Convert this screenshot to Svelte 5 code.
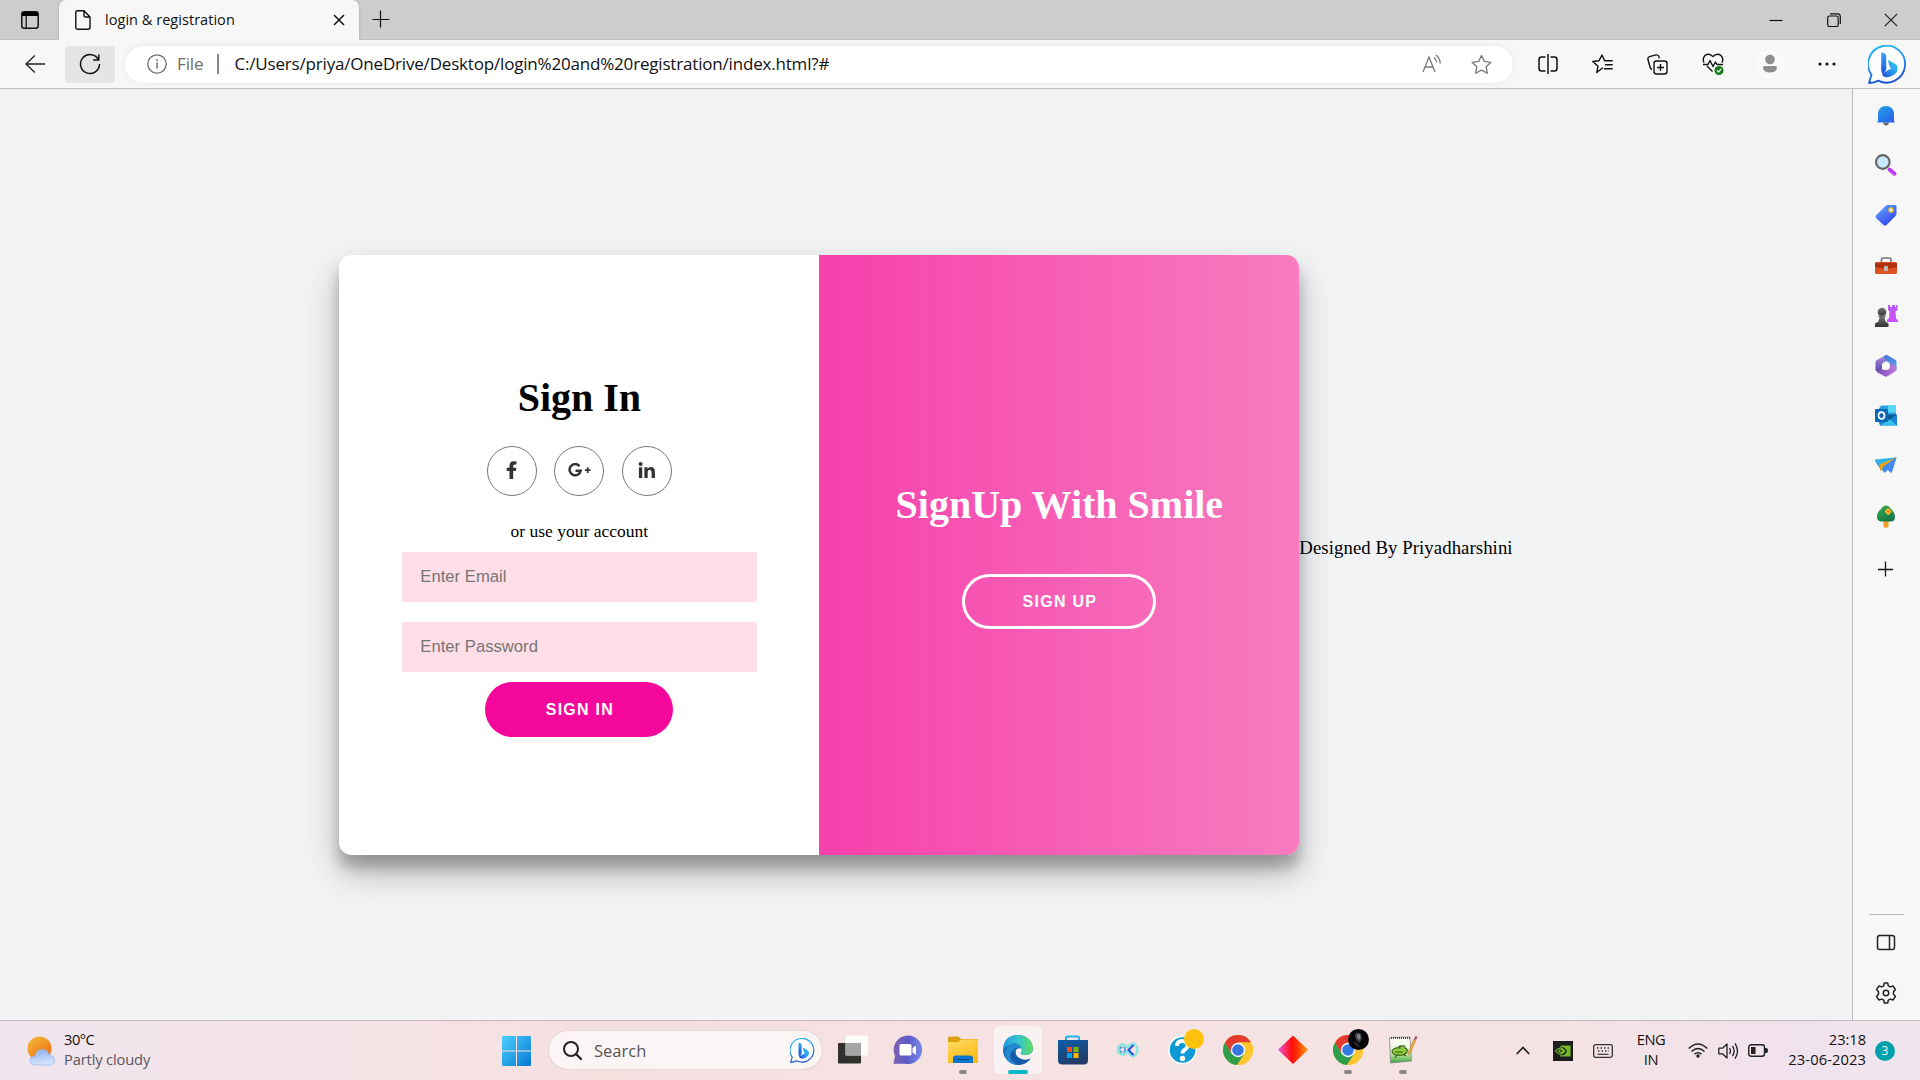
<script>
  const socials = ['facebook', 'google', 'linkedin'];
  const side = ['bell', 'lens', 'tag', 'toolbox', 'games', 'm365', 'outlook', 'drop', 'tree', 'plus'];
  const apps = ['task', 'chat', 'folder', 'edge', 'store', 'vs', 'help', 'chrome', 'diamond', 'chromeUser', 'notepad'];
  const running = ['folder', 'chromeUser', 'notepad'];
</script>

{#snippet bing()}
  <svg viewBox="0 0 38 38" class="fill">
    <path d="M1 37 3.400 29A18 18 0 1 1 10 34.700Q6 37 1 37Z" fill="#fff" stroke="url(#bingRing)" stroke-width="1.800" stroke-linejoin="round" />
    <path d="M13 7q4 .5 4.800 3.500V24l-3.200 4.500Q12.800 27 12.800 24Z" fill="url(#bingStem)" />
    <path d="M19.500 14.500 27.500 19q2.500 3 .5 7.500-3.500 4.500-10 5-3.500-.5-4.500-3.500l9-5-2-3.500Z" fill="url(#bingBowl)" />
  </svg>
{/snippet}

{#snippet chrome()}
  <circle cx="15" cy="15" r="15" fill="#fbc02d" />
  <path d="M2 7.500A15 15 0 0 1 28 7.500H15L8.500 18.800Z" fill="#e33b2e" />
  <path d="M2 7.500A15 15 0 0 0 14 30l7.500-11.200H8.500Z" fill="#2f9e4b" />
  <path d="M28 7.500H15v5l6.500 6.300L14 30A15 15 0 0 0 28 7.500Z" fill="#fdc52e" />
  <circle cx="15" cy="15" r="7.200" fill="#fff" />
  <circle cx="15" cy="15" r="5.800" fill="#3478e5" />
{/snippet}

<svg class="defs" width="0" height="0">
  <defs>
    <linearGradient id="bingRing" x2=".3" y2="1"><stop stop-color="#25bdf4" /><stop offset=".6" stop-color="#238de9" /><stop offset="1" stop-color="#1c4ed0" /></linearGradient>
    <linearGradient id="bingStem" x2="0" y2="1"><stop stop-color="#3aa1f2" /><stop offset="1" stop-color="#1c56df" /></linearGradient>
    <linearGradient id="bingBowl" x1="1" x2="0" y2="1"><stop stop-color="#27d3ee" /><stop offset=".5" stop-color="#2d9cf0" /><stop offset="1" stop-color="#1b45d5" /></linearGradient>
    <linearGradient id="blueG" x2=".8" y2="1"><stop stop-color="#20a6e3" /><stop offset="1" stop-color="#2960ed" /></linearGradient>
    <linearGradient id="tagG" x2=".7" y2="1"><stop stop-color="#65adff" /><stop offset="1" stop-color="#3443f0" /></linearGradient>
    <linearGradient id="winG" x2="1" y2="1"><stop stop-color="#4bd0fb" /><stop offset="1" stop-color="#0878d4" /></linearGradient>
    <linearGradient id="sunG" x2=".8" y2="1"><stop stop-color="#f2bd3b" /><stop offset="1" stop-color="#ef6b12" /></linearGradient>
    <linearGradient id="cloudG" x2=".2" y2="1"><stop stop-color="#8caeed" /><stop offset="1" stop-color="#d3e4fb" /></linearGradient>
    <linearGradient id="edgeG" x2="1"><stop stop-color="#249bd9" /><stop offset=".5" stop-color="#31c3cf" /><stop offset="1" stop-color="#63dd5d" /></linearGradient>
    <linearGradient id="edgeB" x2="1" y2="1"><stop stop-color="#1a80cf" /><stop offset="1" stop-color="#104e96" /></linearGradient>
    <linearGradient id="diaG"><stop stop-color="#ef52dc" /><stop offset=".45" stop-color="#ff1010" /><stop offset=".6" stop-color="#ff2606" /><stop offset="1" stop-color="#ff9f08" /></linearGradient>
    <linearGradient id="chatG" x1="0" y1=".4" x2="1" y2=".5"><stop stop-color="#7d61ae" /><stop offset=".5" stop-color="#5c5cc9" /><stop offset="1" stop-color="#7b8be5" /></linearGradient>
    <linearGradient id="foldG" x2=".5" y2="1"><stop stop-color="#ffdb67" /><stop offset="1" stop-color="#fbbc16" /></linearGradient>
    <linearGradient id="storeG" x2=".4" y2="1"><stop stop-color="#0d5da8" /><stop offset="1" stop-color="#233c68" /></linearGradient>
    <linearGradient id="treeG" x2=".5" y2="1"><stop stop-color="#40ad50" /><stop offset="1" stop-color="#147a48" /></linearGradient>
    <linearGradient id="rookG" x2="0" y2="1"><stop stop-color="#b85cef" /><stop offset="1" stop-color="#cd4cff" /></linearGradient>
    <linearGradient id="pawnG" x2="0" y2="1"><stop stop-color="#777" /><stop offset="1" stop-color="#333" /></linearGradient>
    <linearGradient id="notesG" x2="0" y2="1"><stop stop-color="#fff" /><stop offset=".4" stop-color="#eef6de" /><stop offset=".7" stop-color="#b4dd8c" /><stop offset="1" stop-color="#32a545" /></linearGradient>
    <linearGradient id="hexL" x2="0" y2="1"><stop stop-color="#b48be6" /><stop offset="1" stop-color="#5345a8" /></linearGradient>
    <linearGradient id="hexR" x2="0" y2="1"><stop stop-color="#3f74d8" /><stop offset="1" stop-color="#6fb0ee" /></linearGradient>
    <linearGradient id="hexB"><stop stop-color="#7a4fb5" /><stop offset="1" stop-color="#c07ae0" /></linearGradient>
  </defs>
</svg>

<div class="screen">
  <header class="tabs">
    <div class="workspace">
      <svg width="18" height="18" viewBox="0 0 18 18"><rect x=".8" y=".8" width="16.400" height="16.400" rx="2.500" fill="none" stroke="#111" stroke-width="1.500" /><path d="M1 2.500Q1 1 3 1h12q2 0 2 1.500V5H1Z" fill="#000" /><path d="M5.200 5v12" stroke="#111" stroke-width="1.300" /></svg>
    </div>
    <div class="tab">
      <svg width="16" height="20" viewBox="0 0 16 20" fill="none" stroke="#111" stroke-width="1.400" stroke-linejoin="round"><path d="M2.500.8H9L15 7v10.200q0 2-2 2H2.800q-2 0-2-2V2.800q0-2 1.700-2ZM9 1v4.200Q9 7 10.800 7H15" /></svg>
      <span class="title">login &amp; registration</span>
      <svg class="x" width="12" height="12" viewBox="0 0 12 12" stroke="#111" stroke-width="1.500"><path d="m1 1 10 10M11 1 1 11" /></svg>
    </div>
    <svg class="newtab" width="18" height="18" viewBox="0 0 18 18" stroke="#111" stroke-width="1.200"><path d="M8.500 .5v17M.5 9.500h17" /></svg>
    <div class="window-controls">
      <span><svg width="14" height="14" viewBox="0 0 14 14" stroke="#111" stroke-width="1.200"><path d="M.5 7.500h13" /></svg></span>
      <span><svg width="14" height="14" viewBox="0 0 14 14" fill="none" stroke="#111" stroke-width="1.200"><rect x=".7" y="3" width="10.500" height="10.500" rx="1.800" /><path d="M3 .8h7.500q2.800 0 2.800 2.800V11" /></svg></span>
      <span><svg width="14" height="14" viewBox="0 0 14 14" stroke="#222" stroke-width="1.200"><path d="m.8.8 12.400 12.400M13.200.8.800 13.200" /></svg></span>
    </div>
  </header>

  <nav class="toolbar">
    <svg class="back" width="21" height="18" viewBox="0 0 21 18" fill="none" stroke="#222" stroke-width="1.300"><path d="M20 9H.9M9.800.5 1 9l8.800 8.500" /></svg>
    <div class="reload">
      <svg width="22" height="22" viewBox="0 0 22 22" fill="none" stroke="#111" stroke-width="1.500"><path d="M19.600 7A9.500 9.500 0 1 0 20.500 11M19.800 1.500v5.600h-5.600" /></svg>
    </div>
    <div class="omnibox">
      <svg class="info" width="20" height="20" viewBox="0 0 20 20" fill="none" stroke="#707070" stroke-width="1.300"><circle cx="10" cy="10" r="9.200" /><path d="M10 8.500v6M10 5.200v1.700" stroke-width="1.500" /></svg>
      <span class="file">File</span><i class="divider"></i><span class="url">C:/Users/priya/OneDrive/Desktop/login%20and%20registration/index.html?#</span>
      <svg class="read" width="20" height="20" viewBox="0 0 20 20" fill="none" stroke="#777" stroke-width="1.300"><path d="m1 18 6-15 6 15M3 13h8M12 3.500q2.500 2 2.800 5M14 1q4 3 4.200 8.500" /></svg>
      <svg class="star" width="21" height="21" viewBox="0 0 22 22" fill="none" stroke="#777" stroke-width="1.400" stroke-linejoin="round"><path d="m11 1.500 3 6.200 6.800 1-4.900 4.700 1.200 6.800-6.100-3.300-6.100 3.300 1.200-6.800L1.200 8.700l6.800-1Z" /></svg>
    </div>
    <div class="actions">
      <span><svg width="20" height="20" viewBox="0 0 20 20" fill="none" stroke="#111" stroke-width="1.500"><path d="M7.500 3H3.600Q1 3 1 5.500v9Q1 17 3.600 17h3.900M12.500 3h3.900Q19 3 19 5.500v9q0 2.500-2.600 2.500h-3.900M10 0v20" /></svg></span>
      <span><svg width="21" height="20" viewBox="0 0 21 20" fill="none" stroke="#111" stroke-width="1.400" stroke-linejoin="round" stroke-linecap="round"><path d="m10.500 14-5.700 4.500L6 12.200.8 7.500l6.200-.8L10 1l2.600 5.800h7.600M13.500 10.700h6.700M12.500 14.700h7.700" /></svg></span>
      <span><svg width="21" height="21" viewBox="0 0 21 21" fill="none" stroke="#111" stroke-width="1.400"><rect x="7" y="7" width="13" height="13" rx="2.500" /><path d="M13.500 10v7M10 13.500h7M5 15.500q-1.500-.5-2-2.500L.9 5.300Q.6 3.200 2.500 2.600L9 .9q2.500-.4 3 2l.4 1.500" /></svg></span>
      <span><svg width="22" height="22" viewBox="0 0 22 22" fill="none" stroke="#111" stroke-width="1.400" stroke-linejoin="round"><path d="M2 9.500Q0 5.500 3 2.500q4-3 8 1 4-4 8-1 3 3 1 7M5 13l5.500 5.500M1 11.500h5l2-4 3 6 2.500-4.500 1.500 2.500h6" /><circle cx="17" cy="17.500" r="4.500" fill="#167a19" stroke="none" /><path d="m15 17.500 1.500 1.500 2.700-3" stroke="#fff" stroke-width="1.200" /></svg></span>
      <span class="profile"><svg width="28" height="28" viewBox="0 0 28 28"><circle cx="14" cy="14" r="13.500" fill="#f9f9f9" stroke="#fff" /><circle cx="14" cy="9.500" r="4.800" fill="#8d8d8d" /><path d="M7 17.500Q7 16 8.500 16h11q1.500 0 1.500 1.500-.5 5-7 5t-7-5Z" fill="#8d8d8d" /></svg></span>
      <span><svg width="18" height="4" viewBox="0 0 18 4" fill="#111"><circle cx="2" cy="2" r="1.600" /><circle cx="9" cy="2" r="1.600" /><circle cx="16" cy="2" r="1.600" /></svg></span>
    </div>
    <div class="bing-button">{@render bing()}</div>
  </nav>

  <div class="middle">
    <main>
      <section class="card">
        <form class="signin" onsubmit={(e) => e.preventDefault()}>
          <h1>Sign In</h1>
          <div class="socials">
            {#each socials as s}
              <a href="#top" aria-label={s}>
                {#if s === 'facebook'}
                  <svg width="11" height="18" viewBox="0 0 11 18"><path fill="#333" d="M3.500 18V10H.7V6.700h2.800V4.500Q3.500.2 7.800.2q1.700 0 2.700.2v3H9.200Q7.200 3.300 7.200 5v1.700h3.200L9.800 10H7.200v8Z" /></svg>
                {:else if s === 'google'}
                  <svg width="23" height="14" viewBox="0 0 23 14" fill="none" stroke="#333"><path d="M11.500 3.100A5.600 5.600 0 1 0 12.700 7.800H7.500" stroke-width="2.500" /><path d="M19.700 4.300v5.600M16.900 7.100h5.600" stroke-width="1.800" /></svg>
                {:else}
                  <svg width="17" height="16" viewBox="0 0 17 16" fill="#333"><circle cx="2.600" cy="2.100" r="2" /><path d="M.9 5.300h3.300V16H.9ZM6.400 5.300h3.100v1.500Q10.600 5 13 5 16.900 5 16.900 9.700V16h-3.300v-5.500q0-2.700-1.900-2.700-2 0-2 2.800V16H6.400Z" /></svg>
                {/if}
              </a>
            {/each}
          </div>
          <p>or use your account</p>
          <input type="email" placeholder="Enter Email" />
          <input type="password" placeholder="Enter Password" />
          <button>SIGN IN</button>
        </form>
        <div class="signup">
          <h1>SignUp With Smile</h1>
          <button>SIGN UP</button>
        </div>
      </section>
      <p class="credit">Designed By Priyadharshini</p>
    </main>

    <aside>
      {#each side as icon}
        <div class="side-item">
          <svg width="24" height="24" viewBox="0 0 24 24">
            {#if icon === 'bell'}
              <path d="M9 19.500h6q-.5 3-3 3t-3-3" fill="#666" /><path d="M4 18v-7q.5-8 8-8t8 8v7l1 1.500H3Z" fill="url(#blueG)" />
            {:else if icon === 'lens'}
              <path d="m15.500 16.500 5 4.200" stroke="#c03cf5" stroke-width="4" stroke-linecap="round" /><circle cx="8.800" cy="9" r="6.800" fill="#c9eafb" stroke="#666" stroke-width="2.200" />
            {:else if icon === 'tag'}
              <path d="M2 12.500 11.500 3q1-1 2.500-1h7q1.500 0 1.500 1.500v7q0 1.500-1 2.500l-9 9q-1.500 1-3 0l-7.500-7q-1-1.200 0-2.500Z" fill="url(#tagG)" /><circle cx="17" cy="7" r="2" fill="#dff" stroke="#efc32d" stroke-width="1.500" />
            {:else if icon === 'toolbox'}
              <path d="M7.500 8.500v-3Q7.500 4 9 4h6.500Q17 4 17 5.500v3" fill="none" stroke="#777" stroke-width="1.700" /><rect x="1" y="8" width="22" height="12" rx="1.500" fill="#db5420" /><path d="M1 9h22v4l-8 1.500H9L1 13Z" fill="#ae300f" /><rect x="10" y="12" width="4" height="5" rx="1" fill="#bbb" />
            {:else if icon === 'games'}
              <path d="M14 1h2v2h2V1h3v2h1V1h1.500v5l-2 1.500.5 7 2 2V18H13v-2l2-2 .5-6.500L14 6Z" fill="url(#rookG)" /><circle cx="8" cy="8" r="4.300" fill="url(#pawnG)" /><path d="M3.500 11.500h9l-2 2 1 4 3 2V23H1v-3.500l3.500-2 1-4Z" fill="url(#pawnG)" />
            {:else if icon === 'm365'}
              <path d="m11 1.500 2-.5-1 6-4 3v6L5 18.500l-2.500-1.300q-1-.6-1-1.700V8q0-1 1-1.700Z" fill="url(#hexL)" />
              <path d="M9.500 2.500 11.500 1.300q1-.6 2 0l8 4.700q1 .6 1 1.700v8L20 17l-4.500-2.500V9L12 7Z" fill="url(#hexR)" />
              <path d="m4 17 4-1.500h4l4-2.500v-4l6.500 4v2.600q0 1.100-1 1.700l-8 5q-1.500.8-3 0L3 18.300Z" fill="url(#hexB)" />
              <circle cx="12" cy="12" r="4" fill="#f7f7f7" />
            {:else if icon === 'outlook'}
              <path d="M7 1.500h15v19H5v-16Z" fill="#25a1df" /><path d="M14 1.500h8v7h-8Z" fill="#58d8f6" /><path d="M7 10.500h16l-8 6Z" fill="#075b9d" /><path d="m23 10.500-8 6-9-5v10h17Z" fill="#1987d4" /><path d="m6 21.500 10-6 7 6Z" fill="#37bdf0" /><rect x="1" y="5" width="13" height="13" rx="1" fill="#0868b7" /><ellipse cx="7.500" cy="11.500" rx="3" ry="3.400" fill="none" stroke="#fff" stroke-width="1.700" />
            {:else if icon === 'drop'}
              <path d="m1 7 21.500-3.500-5 15.500-4-3.500L10 18l-5-5Z" fill="#338cdf" /><path d="m.5 5.500 22-2L5.500 11Z" fill="#31b4e8" /><path d="M22.500 3.500 5 10.500l1.500 7 3-5Z" fill="#eaa617" /><path d="M22.500 3.500 17.500 19l-3.500-3-3.500 3-1.500-6Z" fill="#438bec" />
            {:else if icon === 'tree'}
              <path d="M9.500 15h5v7q-2.500 1.500-5 0Z" fill="#f39c26" /><path d="M12 .5q3 0 5 3.500 3.500 3 4 7.500 0 5-4 5H7q-4-.5-4-5Q3 7 7 4q2-3.500 5-3.500Z" fill="url(#treeG)" /><g fill="#f5b823"><circle cx="12.500" cy="6.500" r="1.700" /><circle cx="15.800" cy="6.500" r="1.700" /><circle cx="14.200" cy="4.700" r="1.600" /><circle cx="14.200" cy="8.300" r="1.600" /></g><circle cx="14.200" cy="6.500" r="1.100" fill="#e36d1b" />
            {:else}
              <path d="M11.500 6.500v15M4 14.500h15" stroke="#111" stroke-width="1.300" />
            {/if}
          </svg>
        </div>
      {/each}
      <div class="side-bottom">
        <div class="side-item"><svg width="24" height="24" viewBox="0 0 24 24" fill="none" stroke="#222" stroke-width="1.500"><rect x="3.500" y="4.500" width="17" height="14" rx="2.300" /><path d="M15.500 4.500v14" /></svg></div>
        <div class="side-item"><svg width="24" height="24" viewBox="0 0 24 24" fill="none" stroke="#222" stroke-width="1.500" stroke-linejoin="round"><path d="M10.300 2h3.400l.6 2.800 2 1.100 2.700-.9 2.500 3.600-2 2.200v2.400l2 2.200-2.500 3.600-2.700-.9-2 1.100-.6 2.800h-3.400l-.6-2.800-2-1.100L5 19l-2.500-3.600 2-2.200v-2.400l-2-2.200L5 5l2.700.9 2-1.100Z" /><circle cx="12" cy="12" r="2.700" /></svg></div>
      </div>
    </aside>
  </div>

  <footer>
    <div class="weather">
      <svg width="28" height="30" viewBox="0 0 28 30"><circle cx="12.500" cy="12.500" r="12" fill="url(#sunG)" /><path d="M7 29q-4-.3-4-4.500t5-4.500q1-6.500 7-6.500t7 5.500q5.500.5 5.500 5.300 0 4.400-4.500 4.700Z" fill="url(#cloudG)" stroke="#8eafed" stroke-width=".6" /></svg>
      <div><b>30°C</b><span>Partly cloudy</span></div>
    </div>
    <div class="dock">
      <svg class="start" width="29" height="30" viewBox="0 0 29 29" preserveAspectRatio="none" fill="url(#winG)"><path d="M1 0h13v14H0V1q0-1 1-1Zm14 0h13q1 0 1 1v13H15ZM0 15h14v14H1q-1 0-1-1Zm15 0h14v13q0 1-1 1H15Z" /></svg>
      <div class="search">
        <svg width="19" height="19" viewBox="0 0 19 19" fill="none" stroke="#222" stroke-width="2" stroke-linecap="round"><circle cx="8" cy="8" r="7" /><path d="m13 13 5 5" stroke-width="2.400" /></svg>
        <span>Search</span>
        <div class="bing-small">{@render bing()}</div>
      </div>
      <div class="apps">
        {#each apps as app}
          <div class="app" class:active={app === 'edge'} class:running={running.includes(app)}>
            <svg width="30" height="30" viewBox="0 0 30 30">
              {#if app === 'task'}
                <rect y="8" width="23" height="20.500" rx="1" fill="#30302e" /><rect x="7.500" y=".5" width="22.500" height="20" rx="1" fill="#fff" opacity=".86" /><path d="M7.500 8H23v12.500H7.500Z" fill="#a6a5a4" />
              {:else if app === 'chat'}
                <path d="M.5 28.800 2 21A14.300 14.300 0 1 1 12 28.800Z" fill="url(#chatG)" /><rect x="6.500" y="9" width="12" height="11.500" rx="1.500" fill="#fff" /><path d="m19.500 13 3.500-2.500V20l-3.500-2.500Z" fill="#fff" />
              {:else if app === 'folder'}
                <path d="M0 3q0-1.500 1.500-1.500h9L13 4h17v5H0Z" fill="#dfa010" /><path d="M0 7h10l3-2.500h17V28H0Z" fill="url(#foldG)" /><path d="M5 28v-4.500q0-3 3-3h14q3 0 3 3V28Z" fill="#0876cb" /><path d="M9 24.500h12" stroke="#064b91" />
              {:else if app === 'edge'}
                <circle cx="15" cy="15" r="15" fill="url(#edgeB)" /><path d="M0 14Q1 0 15 0q14 1 15 13 0 7-7.500 7-5 0-5-2 2-2 1-4.500Q16 8 9.500 9 4 10 0 14Z" fill="url(#edgeG)" /><path d="M10 8Q2 12 2 21q4 9 13 9Q5 23 10 15q3-4 8.500-1.500Q16 8 10 8Z" fill="#2389d0" /><path d="M18.500 13.500q-5-1-6 3 0 6 7.500 8 6 1 10-3V15q-1 5-8 5-4.500 0-4.500-2 2-2 1-4.500Z" fill="#f9f0f1" /><path d="M12.500 16q-2 4 2 8 6 4 13-.5-4 6.500-12.500 6.500Q5 26 8 17Z" fill="#145ca9" />
              {:else if app === 'store'}
                <path d="M8 6V3q0-1.500 1.500-1.500h10Q21 1.500 21 3v3" fill="none" stroke="#25b2ed" stroke-width="2" /><path d="M0 5h30v20q0 4.500-4 4.500H4q-4 0-4-4.500Z" fill="url(#storeG)" /><path fill="#f25022" d="M9 12h5v5H9Z" /><path fill="#7fba00" d="M15.500 12h5v5h-5Z" /><path fill="#00a4ef" d="M9 18h5v5H9Z" /><path fill="#ffb900" d="M15.500 18h5v5h-5Z" />
              {:else if app === 'vs'}
                <path d="M20.500 8.500Q17 9 14.500 12.500 12 9.500 9 9.500q-4 1-4 5t4 5q3 0 5.500-3.500 2.500 4.500 6 5.500 4-3 4-6.500t-4-6.500Z" fill="none" stroke="#8de3dd" stroke-width="2.400" stroke-linejoin="round" /><path d="m20.500 10-5 5 5 5" fill="none" stroke="#2550dd" stroke-width="2" /><circle cx="9.500" cy="14.700" r="2.700" fill="none" stroke="#2a8fe1" stroke-width="1.400" stroke-dasharray="3 1.500" />
              {:else if app === 'help'}
                <circle cx="14.500" cy="15" r="13.600" fill="#0d99d5" stroke="#fff" stroke-width="1.600" /><path d="M9 11q0-5 5-5 5.500 0 5.500 4.500 0 2.500-3 4.500-2 1-2 3.500" fill="none" stroke="#fff" stroke-width="3.800" /><circle cx="14.500" cy="23.500" r="2.700" fill="#fff" />
              {:else if app === 'chrome' || app === 'chromeUser'}
                {@render chrome()}
              {:else if app === 'diamond'}
                <path d="m15 .5 15 14.300L15 29 0 14.800Z" fill="url(#diaG)" />
              {:else}
                <path d="M1.500 2.500 22 2l1.500 24-21 2Z" fill="url(#notesG)" stroke="#888" stroke-width=".8" /><path d="M3 3h19" stroke="#444" stroke-width="1.800" stroke-dasharray="1 1" /><path d="M4 16q3-4 6-3 1-3 4-2 3-1 3 2 3 1 2 4-3 4-8 3-6 1-7-4Zm3 1h8m-6 3-2 3m8-4 3 2M12 11v3" fill="#8fd03c" stroke="#35531c" stroke-width="1.100" /><path d="m20.500 17 5.500-13 2 .8-5.500 13-2 1.700Z" fill="#eda942" stroke="#b77629" stroke-width=".5" /><path d="m26 4 1.500-3 1.800.8-1 3Z" fill="#9a4d60" />
              {/if}
            </svg>
            {#if app === 'help'}<i class="badge yellow"></i>{/if}
            {#if app === 'chromeUser'}
              <i class="badge dark"><svg viewBox="0 0 21 21" class="fill"><path d="M7 5q3-3 6 0l1 4-2 5-3-2-2-4Z" fill="#3c4048" /><path d="m9 6 3-1 .5 4-1.500 2-2-3Z" fill="#84878f" /><path d="m6 12 3 2 4 5-6-3Z" fill="#2c3036" /></svg></i>
            {/if}
          </div>
        {/each}
      </div>
    </div>
    <div class="tray">
      <svg class="chev" width="14" height="9" viewBox="0 0 14 9" fill="none" stroke="#222" stroke-width="1.700"><path d="m.8 8 6.200-6.500L13.200 8" /></svg>
      <svg class="gpu" width="20" height="20" viewBox="0 0 20 20"><path d="M0 0h20v20H0Z" fill="#1d1d1d" /><path d="M8 5h9v10H8q5-1 6-5-2-4-6-4Z" fill="#76b82a" /><path d="M2.500 10Q7 4 12 10q-5 6-9.500 0Zm3 0q2.500-3.500 5 0-2.500 2.500-5 0ZM8 5v1.500M8 13.500V15h9V5H8" fill="none" stroke="#76b82a" stroke-width="1.200" /></svg>
      <svg class="keys" width="20" height="14" viewBox="0 0 20 14" fill="none" stroke="#333"><rect x=".7" y=".7" width="18.600" height="12.600" rx="1.800" stroke-width="1.300" /><path d="M4 4h12.500M5 7h11" stroke-width="1.500" stroke-dasharray="1.500 2" /><path d="M4.500 10.300h11" stroke-width="1.200" /></svg>
      <div class="lang"><span>ENG</span><span>IN</span></div>
      <svg class="wifi" width="20" height="15" viewBox="0 0 20 15" fill="none" stroke="#222" stroke-width="1.400"><path d="M.7 5.500q9.300-9 18.600 0M3.500 8.500q6.500-6.200 13 0M6.400 11.300q3.600-3.200 7.200 0" /><circle cx="10" cy="13" r="1.700" fill="#222" stroke="none" /></svg>
      <svg class="vol" width="21" height="18" viewBox="0 0 21 18" fill="none" stroke="#222" stroke-width="1.300" stroke-linejoin="round"><path d="M.8 6.200h3.700L9 2v14l-4.500-4.200H.8ZM11.500 6q2 3 0 6M14.500 3.800q3.300 5.200 0 10.400M17 1.300q5 7.700 0 15.400" /></svg>
      <svg class="battery" width="20" height="13" viewBox="0 0 20 13"><rect x=".7" y=".7" width="15.800" height="11.600" rx="2.500" fill="none" stroke="#222" stroke-width="1.400" /><path d="M3 3h4.500v7H3ZM17 4h1.500q1.500 0 1.500 2.500T18.500 9H17Z" fill="#222" /></svg>
      <div class="clock"><span class="time">23:18</span><span>23-06-2023</span></div>
      <div class="count">3</div>
    </div>
  </footer>
</div>

<style>
  :global(body) { margin: 0; overflow: hidden; }
  * { box-sizing: border-box; }
  svg { display: block; flex: none; }
  .defs { position: absolute; }
  .fill { width: 100%; height: 100%; }
  .screen { width: 1920px; height: 1080px; display: flex; flex-direction: column; font-family: "Open Sans", "Noto Sans", sans-serif; color: #111; background: #f1f3f5; }

  .tabs { height: 40px; display: flex; background: #cdcdcd; box-shadow: inset 0 -1px #bdbdbd; }
  .workspace { width: 59px; padding: 11px 0 0 21px; border-bottom-right-radius: 6px; }
  .tab { width: 300px; display: flex; align-items: center; padding: 0 14px 0 16px; background: #f7f7f7; border-radius: 7px 7px 0 0; box-shadow: 0 0 3px #aaa; clip-path: inset(0 -4px 0 -4px); }
  .title { margin: -1px 0 0 14px; font-size: 14.500px; letter-spacing: .04px; white-space: nowrap; }
  .x { margin-left: auto; }
  .newtab { margin: 10px 0 0 13px; }
  .window-controls { display: flex; margin-left: auto; }
  .window-controls span { width: 57.500px; height: 39px; display: grid; place-items: center; }

  .toolbar { height: 49px; display: flex; align-items: center; background: #f7f7f7; border-bottom: 1px solid #bfbfbf; padding-right: 13px; }
  .back { margin: -1px 19px 0 25px; }
  .reload { width: 50px; height: 37px; border-radius: 3px; display: grid; place-items: center; background: #e5e5e5; }
  .omnibox { width: 1388px; height: 37px; margin-left: 10px; border-radius: 19px; background: #fff; box-shadow: 0 0 5px #e6e6e6; display: flex; align-items: center; padding: 0 21px 0 22px; font-size: 17px; white-space: nowrap; }
  .file { width: 28px; margin-left: 10px; margin-top: -2px; color: #6e6e6e; letter-spacing: -.1px; }
  .divider { width: 1.500px; height: 20px; background: #888; margin: 0 16px 0 12px; }
  .url { letter-spacing: -.185px; margin-top: -2px; }
  .read { margin-left: auto; margin-right: 29px; }
  .actions { display: flex; margin-left: 7px; }
  .actions span { width: 55px; height: 38px; display: grid; place-items: center; }
  .actions .profile { width: 59px; }
  .bing-button { width: 39px; height: 39px; margin-left: auto; }

  .middle { flex: 1; min-height: 0; display: flex; }
  main { width: 1852px; display: flex; align-items: center; justify-content: center; background: #f1f3f5; }
  .card { width: 960px; height: 600px; display: flex; border-radius: 12.500px; overflow: hidden; background: #fff; box-shadow: 0 17.500px 35px rgba(0, 0, 0, .25), 0 12.500px 12.500px rgba(0, 0, 0, .22); }
  .signin, .signup { width: 480px; display: flex; flex-direction: column; align-items: center; font-family: "Liberation Serif", serif; }
  .signin { padding-top: 120px; color: #000; }
  .signup { padding-top: 227px; color: #fff; background: linear-gradient(to right, #f640ac, #f87cbf); }
  h1 { margin: 0; font-size: 40px; line-height: 46px; letter-spacing: 0; }
  .socials { display: flex; gap: 17.500px; margin: 25px 0; }
  .socials a { width: 50px; height: 50px; border: 1px solid #777; border-radius: 50%; display: grid; place-items: center; padding-bottom: 2px; }
  .signin p { margin: 0 0 10px; font-size: 17.500px; line-height: 21px; }
  input { width: 355px; height: 50px; margin: 0 0 20px; border: 0; border-radius: 0; padding: 1px 18.500px 0; background: #ffdee7; font-family: "Liberation Sans", sans-serif; font-size: 16.667px; }
  input::placeholder { color: #757575; opacity: 1; }
  button { height: 55px; border-radius: 27.500px; padding: 1px 0 0 1px; color: #fff; font-family: "Liberation Sans", sans-serif; font-size: 16px; font-weight: 700; letter-spacing: 1.250px; text-align: center; }
  .signin button { width: 188px; margin-top: -10px; border: 0; background: #f3089b; }
  .signup button { width: 194px; margin-top: 46px; border: 3px solid #fff; background: transparent; }
  .credit { margin: 0 0 14px; font-family: "Liberation Serif", serif; font-size: 18.750px; letter-spacing: .07px; line-height: 25px; white-space: nowrap; color: #000; }

  aside { width: 68px; display: flex; flex-direction: column; padding-top: 1px; background: #f7f7f7; border-left: 1px solid #bababa; }
  .side-item { height: 50.200px; display: grid; place-items: center; padding-right: 1px; }
  .side-bottom { margin: auto 16px 2px 16px; border-top: 1px solid #bbb; padding-top: 3px; }

  footer { height: 60px; display: flex; border-top: 1px solid #c5b5bb; background: linear-gradient(90deg, #f0e5ee, #f6e3e6 20%, #f4e0df 31%, #f6e2e2 50%, #f5e3e3 80%, #f1e2ec 92%, #f0e5ef); }
  .weather { width: 502px; display: flex; padding: 6px 0 0 27px; }
  .weather svg { margin-top: 9px; }
  .weather div { margin-left: 9px; display: flex; flex-direction: column; font-size: 14.700px; line-height: 20px; margin-top: 2px; }
  .weather b { font-weight: 400; letter-spacing: -.5px; }
  .weather span { color: #5b5559; letter-spacing: -.15px; }
  .dock { display: flex; }
  .start { margin-top: 15px; }
  .search { width: 273px; height: 38px; margin: 10px 4px 0 18px; border-radius: 20px; display: flex; align-items: center; padding: 0 7px 0 14px; background: #fcf5f5; box-shadow: 0 0 0 1px #e8d5d6, 0 1px #cdbdbe; }
  .search span { margin-left: 12px; font-size: 16.500px; color: #555; }
  .bing-small { width: 25px; height: 25px; margin-left: auto; }
  .apps { display: flex; gap: 7px; margin-left: 3px; padding-top: 5px; }
  .app { width: 48px; height: 48px; position: relative; display: grid; place-items: center; border-radius: 5px; }
  .app.active { background: #faf1f2; box-shadow: 0 0 0 1px #efdfe1; }
  .app.active::after, .app.running::after { content: ''; position: absolute; bottom: 0; left: 20px; width: 8px; height: 4px; border-radius: 2px; background: #8e8587; }
  .app.active::after { left: 14px; width: 20px; background: #09b8cb; }
  .badge { position: absolute; top: 3px; right: 3px; width: 20px; height: 20px; border-radius: 50%; }
  .yellow { background: #ffc20f; }
  .dark { width: 21px; height: 21px; background: #050608; overflow: hidden; }
  .tray { margin-left: auto; display: flex; align-items: center; padding-right: 25px; font-size: 14.700px; line-height: 20px; }
  .chev { margin-right: 23px; }
  .gpu { margin-right: 20px; }
  .keys { margin-right: 19px; }
  .lang { width: 38px; display: flex; flex-direction: column; align-items: center; margin: -3px 18px 0 0; letter-spacing: -.4px; }
  .wifi { margin-right: 10px; }
  .vol { margin-right: 9px; }
  .clock { width: 98px; display: flex; flex-direction: column; align-items: flex-end; margin-top: -3px; letter-spacing: .1px; white-space: nowrap; }
  .time { letter-spacing: -.05px; }
  .count { width: 20px; height: 20px; margin-left: 9px; border-radius: 50%; background: #00a0ac; color: #fff; display: grid; place-items: center; font-size: 12px; }
</style>
